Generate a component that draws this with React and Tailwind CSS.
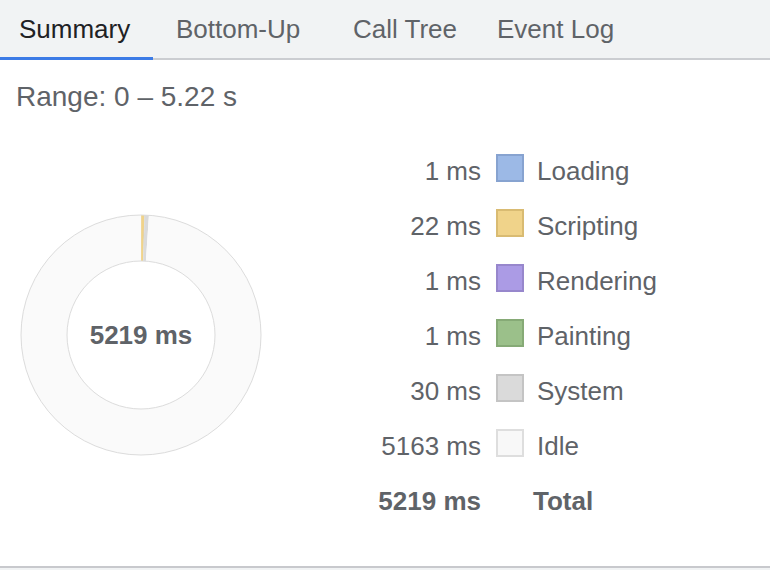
import React from "react";

const tabs = [
  { name: "Summary", className: "w-[153px] pl-[19px] text-[#202124]", active: true },
  { name: "Bottom-Up", className: "w-[177px] pl-[23px]" },
  { name: "Call Tree", className: "w-[145px] pl-[23px]" },
  { name: "Event Log", className: "w-[162px] pl-[22px]" },
];

const categories = [
  { name: "Loading", ms: 1, fill: "#9cb9e6", swatch: "bg-[#9cb9e6] border-[#87a3d0]" },
  { name: "Scripting", ms: 22, fill: "#f0d38a", swatch: "bg-[#f0d38a] border-[#d9bb72]" },
  { name: "Rendering", ms: 1, fill: "#ab9be5", swatch: "bg-[#ab9be5] border-[#9787cc]" },
  { name: "Painting", ms: 1, fill: "#9bc08a", swatch: "bg-[#9bc08a] border-[#86aa76]" },
  { name: "System", ms: 30, fill: "#dadada", swatch: "bg-[#dadada] border-[#c4c4c4]" },
  { name: "Idle", ms: 5163, fill: "#fafafa", swatch: "bg-[#f8f8f8] border-[#dedede]" },
];

// shown values are rounded, the real total is 5219 ms
const total = 5219;

// slice of a ring, angles in radians clockwise from 12 o'clock
function slicePath(cx, cy, R, r, a0, a1) {
  const pt = (rad, a) => `${(cx + rad * Math.sin(a)).toFixed(3)} ${(cy - rad * Math.cos(a)).toFixed(3)}`;
  const large = a1 - a0 > Math.PI ? 1 : 0;
  return `M ${pt(R, a0)} A ${R} ${R} 0 ${large} 1 ${pt(R, a1)} L ${pt(r, a1)} A ${r} ${r} 0 ${large} 0 ${pt(r, a0)} Z`;
}

function Donut() {
  const c = 121;
  const R = 120;
  const r = 74;
  const sum = categories.reduce((s, cat) => s + cat.ms, 0);
  let angle = 0;
  const slices = categories.map(cat => {
    const a0 = angle;
    angle += (cat.ms / sum) * Math.PI * 2;
    return <path key={cat.name} d={slicePath(c, c, R, r, a0, angle)} fill={cat.fill} />;
  });
  return (
    <div className="grid w-[242px] h-[242px]">
      <svg className="[grid-area:1/1]" width="242" height="242" viewBox="0 0 242 242">
        {slices}
        <circle cx={c} cy={c} r={R} fill="none" stroke="#dcdcdc" strokeWidth="1" />
        <circle cx={c} cy={c} r={r} fill="none" stroke="#dcdcdc" strokeWidth="1" />
      </svg>
      <div className="[grid-area:1/1] flex items-center justify-center text-[26px] font-bold">
        {total} ms
      </div>
    </div>
  );
}

function LegendRow({ cat }) {
  return (
    <div className="h-[55px] flex items-center">
      <span className="w-[120px] text-right pt-[6px]">{cat.ms} ms</span>
      <span className={`ml-[15px] w-[28px] h-[28px] border-2 ${cat.swatch}`} />
      <span className="ml-[13px] pt-[6px]">{cat.name}</span>
    </div>
  );
}

export default function App() {
  return (
    <div className="w-[770px] h-[570px] flex flex-col bg-white text-[#5f6368] font-['Liberation_Sans',Arial,sans-serif]">
      <div className="h-[60px] shrink-0 flex bg-[#f1f3f4] border-b-2 border-[#cbcdd1]">
        {tabs.map(tab => (
          <div key={tab.name} className={`relative h-full flex items-center text-[26px] ${tab.className}`}>
            {tab.name}
            {tab.active && <span className="absolute left-0 right-0 bottom-[-2px] h-[3px] bg-[#3c7be6]" />}
          </div>
        ))}
      </div>

      <div className="flex-1 flex flex-col">
        <div className="pl-[16px] pt-[21px] text-[28px] leading-[32px]">Range: 0 – 5.22 s</div>
        <div className="flex items-start">
          <div className="ml-[20px] mt-[101px]">
            <Donut />
          </div>
          <div className="ml-[99px] mt-[27px] flex flex-col text-[26px] leading-[30px]">
            {categories.map(cat => <LegendRow key={cat.name} cat={cat} />)}
            <div className="h-[55px] flex items-center font-bold">
              <span className="w-[120px] text-right pt-[6px]">{total} ms</span>
              <span className="ml-[15px] w-[28px]" />
              <span className="ml-[9px] pt-[6px]">Total</span>
            </div>
          </div>
        </div>
      </div>

      <div className="h-[4px] shrink-0 border-t-2 border-[#c8c9cd] bg-[#f1f3f4]" />
    </div>
  );
}
